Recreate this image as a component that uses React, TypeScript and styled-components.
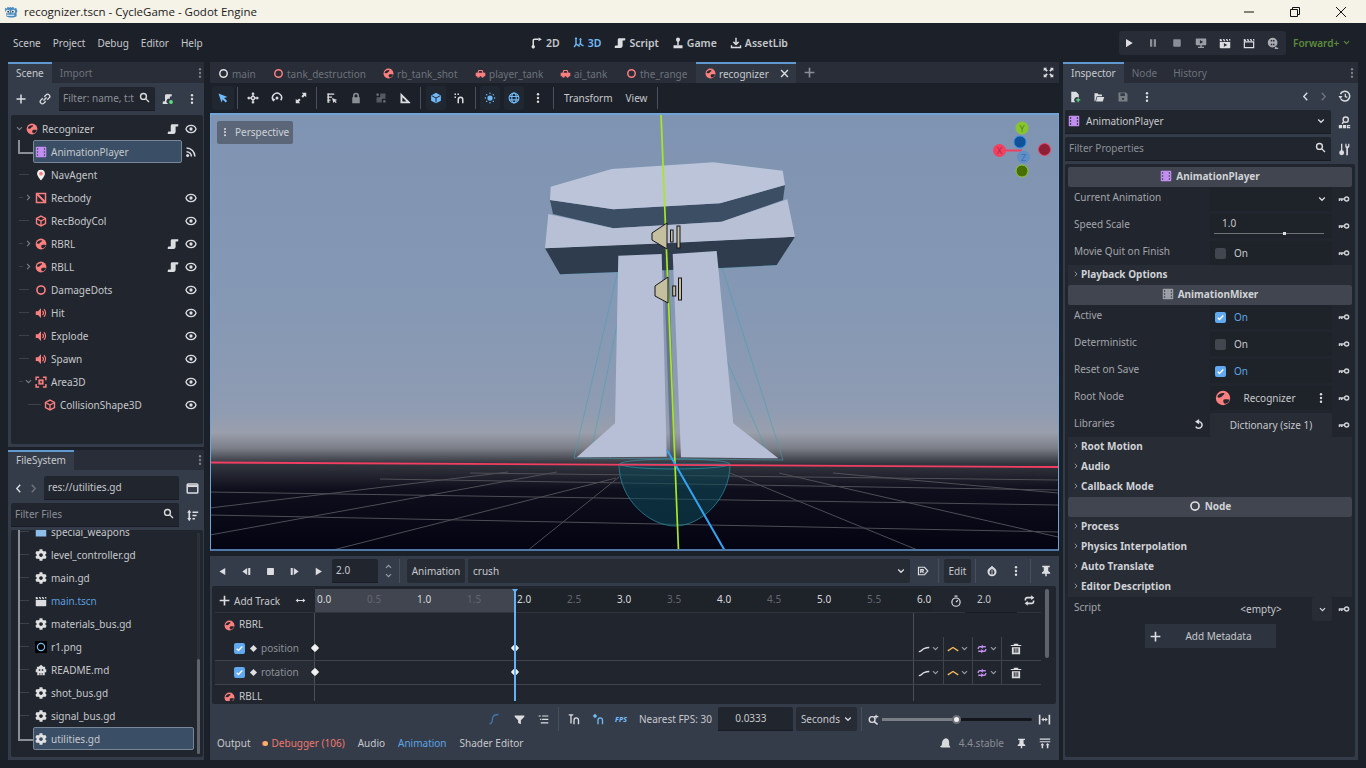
import React from "react";
import styled, { createGlobalStyle } from "styled-components";
import { FaCog } from "react-icons/fa";

const RED = "#fc7f7f";
const TXT = "#c6c8cc";
const DIM = "#6d727b";
const BLUE = "#70bafa";
const DARK = "#21252e";
const PANEL = "#353c49";

const Global = createGlobalStyle`
  html, body { margin: 0; padding: 0; background: #1c2029; }
  body { width: 1366px; height: 768px; overflow: hidden; font-family: "Noto Sans", sans-serif; font-size: 10px; color: ${TXT}; }
  * { box-sizing: border-box; }
`;

const Glyph = styled.svg<{ $c?: string }>`
  flex: none;
  display: block;
  color: ${(p) => p.$c || "#dcdde0"};
`;

const icons: Record<string, React.ReactNode> = {
  plus: <path fill="currentColor" d="M7 2h2v5h5v2H9v5H7V9H2V7h5z" />,
  dots: <g fill="currentColor"><circle cx="8" cy="3" r="1.6" /><circle cx="8" cy="8" r="1.6" /><circle cx="8" cy="13" r="1.6" /></g>,
  search: <g fill="none" stroke="currentColor" strokeWidth="2"><circle cx="6.5" cy="6.5" r="4.3" /><path d="M10 10l4.5 4.5" /></g>,
  link: <g fill="none" stroke="currentColor" strokeWidth="1.8"><path d="M7 5l2.5-2.5a2.6 2.6 0 0 1 4 4L11 9" /><path d="M9 11l-2.5 2.5a2.6 2.6 0 0 1-4-4L5 7" /><path d="M6 10l4-4" /></g>,
  eye: <g><path fill="none" stroke="currentColor" strokeWidth="1.7" d="M8 3.2C4.6 3.2 2 5.6 1.3 8c.7 2.4 3.3 4.8 6.7 4.8s6-2.4 6.7-4.8C14 5.6 11.4 3.2 8 3.2z" /><circle fill="currentColor" cx="8" cy="8" r="2.2" /></g>,
  script: <path fill="currentColor" d="M6.5 1.5H15v2.2a1 1 0 0 1-1 1h-2.5v7.3a3 3 0 0 1-3 2.8H1v-1.8a1.6 1.6 0 0 1 1.6-1.6H5V3.6a2.1 2.1 0 0 1 1.5-2.1z" />,
  addscript: <g><path fill="currentColor" d="M5.5 1.5H13v2.2a1 1 0 0 1-1 1h-1.5v3a3.5 3.5 0 0 0-2 6.8H1v-1.8a1.6 1.6 0 0 1 1.6-1.6H4V3.6a2.1 2.1 0 0 1 1.5-2.1z" /><circle cx="12" cy="12" r="2.6" fill="#5fd97f" /></g>,
  film: <path fill="currentColor" fillRule="evenodd" d="M2 1h12a1 1 0 0 1 1 1v12a1 1 0 0 1-1 1H2a1 1 0 0 1-1-1V2a1 1 0 0 1 1-1zm.6 2v2h1.6V3zm0 4v2h1.6V7zm0 4v2h1.6v-2zm9.2-8v2h1.6V3zm0 4v2h1.6V7zm0 4v2h1.6v-2z" />,
  globe: <g><circle cx="8" cy="8" r="7.2" fill="currentColor" /><path fill="#23272f" d="M2.2 7c1-2.6 3.6-4.2 6.8-3.9.8.6.4 1.6-.6 2-1.2.5-1.2 1.8-2.6 2.2C4.6 7.6 3.4 8 2.2 7zM8.8 9.6c1.8-.6 4.6-.7 5.8.1-.6 2.1-2.5 3.8-4.8 4.1-1.4-.6-2.2-3-1-4.2z" /></g>,
  pin: <g><path fill="#eeeeee" d="M8 1a5.2 5.2 0 0 0-5.2 5.2C2.8 9.6 8 15 8 15s5.2-5.4 5.2-8.8A5.2 5.2 0 0 0 8 1z" /><circle cx="8" cy="6.2" r="2.5" fill={RED} /></g>,
  rec: <g fill="none" stroke="currentColor" strokeWidth="2"><rect x="2" y="2" width="12" height="12" /><path d="M3 3l10 10" strokeWidth="2.6" /></g>,
  cube: <g fill="none" stroke="currentColor" strokeWidth="1.8"><path d="M8 1.5l6 3.2v6.6l-6 3.2-6-3.2V4.7z" /><path d="M2.5 5L8 8l5.5-3M8 8v6" /></g>,
  ring: <circle cx="8" cy="8" r="5.4" fill="none" stroke="currentColor" strokeWidth="2.2" />,
  speaker: <g><path fill="currentColor" d="M1 5.5h3l4-4v13l-4-4H1z" /><path fill="none" stroke="currentColor" strokeWidth="1.5" d="M10 5.2a4 4 0 0 1 0 5.6M12 3a7 7 0 0 1 0 10" /></g>,
  area: <g fill="none" stroke="currentColor" strokeWidth="2"><path d="M1.5 5.5v-4h4M10.5 1.5h4v4M14.5 10.5v4h-4M5.5 14.5h-4v-4" /><rect x="5.5" y="5.5" width="5" height="5" fill="currentColor" fillOpacity=".3" /></g>,
  rss: <g><circle cx="3.5" cy="12.5" r="2" fill="currentColor" /><path fill="none" stroke="currentColor" strokeWidth="2" d="M2 7.5a6.5 6.5 0 0 1 6.5 6.5M2 2.8A11.2 11.2 0 0 1 13.2 14" /></g>,
  clapper: <g fill="currentColor"><path d="M1 6.5h14V14a1 1 0 0 1-1 1H2a1 1 0 0 1-1-1z" /><path d="M1 2.5h2l1.5 3H1zM5 2.5h2l1.5 3h-2zM9 2.5h2l1.5 3h-2zM13 2.5h2v3h-.5z" /></g>,
  clapperPlay: <g fill="currentColor"><path fillRule="evenodd" d="M1 6.5h14V14a1 1 0 0 1-1 1H2a1 1 0 0 1-1-1zM6.5 8v5l4.5-2.5z" /><path d="M1 2.5h2l1.5 3H1zM5 2.5h2l1.5 3h-2zM9 2.5h2l1.5 3h-2zM13 2.5h2v3h-.5z" /></g>,
  clapperLine: <g><path fill="none" stroke="currentColor" strokeWidth="1.6" d="M1.8 6.5h12.4v7.7H1.8z" /><path fill="currentColor" d="M1 2.5h2l1.5 3H1zM5 2.5h2l1.5 3h-2zM9 2.5h2l1.5 3h-2zM13 2.5h2v3h-.5z" /></g>,
  folder: <path fill="currentColor" d="M1 3h5l1.5 1.5H15V14H1z" />,
  readme: <path fill="currentColor" fillRule="evenodd" d="M8 1l3 2.5h2.5V7H15v4h-2v4h-3v-3H9v3H7v-3H6v3H3v-4H1V7h1.5V3.5H5zM5 7v2h2V7zm4 0v2h2V7z" />,
  chevDown: <path fill="none" stroke="currentColor" strokeWidth="2" d="M3.5 5.5L8 10l4.5-4.5" />,
  chevUp: <path fill="none" stroke="currentColor" strokeWidth="2" d="M3.5 10.5L8 6l4.5 4.5" />,
  chevRight: <path fill="none" stroke="currentColor" strokeWidth="2" d="M5.5 3.5L10 8l-4.5 4.5" />,
  chevLeft: <path fill="none" stroke="currentColor" strokeWidth="2" d="M10.5 2.5L5.5 8l5 5.5" />,
  chevNext: <path fill="none" stroke="currentColor" strokeWidth="2" d="M5.5 2.5l5 5.5-5 5.5" />,
  panelBox: <g fill="none" stroke="currentColor"><rect x="1.5" y="2.5" width="13" height="11" rx="1" strokeWidth="1.8" /><path d="M1.5 5h13" strokeWidth="2.4" /></g>,
  sort: <g fill="currentColor"><path d="M4 1L1.5 4.5H3V11H1.5L4 15l2.5-4H5V4.5h1.5z" /><path d="M8 3h7v1.8H8zM8 7h5v1.8H8zM8 11h3v1.8H8z" /></g>,
  close: <path fill="none" stroke="currentColor" strokeWidth="2" d="M3 3l10 10M13 3L3 13" />,
  fullscreen: <path fill="currentColor" d="M1 1h5L4.5 2.5 7 5 5 7 2.5 4.5 1 6zM15 1v5l-1.5-1.5L11 7 9 5l2.5-2.5L10 1zM1 15v-5l1.5 1.5L5 9l2 2-2.5 2.5L6 15zM15 15h-5l1.5-1.5L9 11l2-2 2.5 2.5L15 10z" />,
  cursor: <path fill="currentColor" d="M2 2l12 4.5-4.5 1.5 4 4-2 2-4-4L6 14z" />,
  move: <path fill="currentColor" fillRule="evenodd" d="M8 0l2.5 3H9v2a3 3 0 0 1 2 2h2V5.5L16 8l-3 2.5V9h-2a3 3 0 0 1-2 2v2h1.5L8 16l-2.5-3H7v-2a3 3 0 0 1-2-2H3v1.5L0 8l3-2.5V7h2a3 3 0 0 1 2-2V3H5.5zM8 6.700a1.3 1.3 0 1 0 0 2.6 1.3 1.3 0 0 0 0-2.6z" />,
  rotate: <g><path fill="none" stroke="currentColor" strokeWidth="2" d="M3.5 11.5A6 6 0 1 1 13 11" /><path fill="currentColor" d="M1 8l5 1.5L3 13z" /><circle cx="8" cy="8" r="2" fill="currentColor" /></g>,
  scale: <path fill="currentColor" d="M9 1h6v6l-2-2-2.5 2.5L8.5 5.5 11 3zM7 15H1V9l2 2 2.5-2.5 2 2L5 13z" />,
  listSel: <g fill="currentColor"><path d="M2 2h9v1.8H2zM2 6h6v1.8H2zM2 10h4v1.8H2zM2 14h3v-1H2z" /><path d="M8 8l7 2.5-2.7 1 2 2-1.3 1.3-2-2L10 15z" /><path d="M2 2h1.8v12H2z" /></g>,
  lock: <path fill="currentColor" fillRule="evenodd" d="M8 1a4 4 0 0 1 4 4v2h1v8H3V7h1V5a4 4 0 0 1 4-4zm0 2a2 2 0 0 0-2 2v2h4V5a2 2 0 0 0-2-2z" />,
  group: <g fill="currentColor"><rect x="2" y="2" width="3" height="3" /><rect x="7" y="2" width="7" height="7" opacity=".7" /><rect x="2" y="7" width="7" height="7" opacity=".7" /><rect x="11" y="11" width="3" height="3" /></g>,
  ruler: <path fill="currentColor" fillRule="evenodd" d="M2 1l13 13v1H2zm2.5 6v5.500H10z" />,
  snap: <g><g fill="currentColor"><rect x="2" y="2" width="2" height="2" /><rect x="6" y="2" width="2" height="2" /><rect x="2" y="6" width="2" height="2" /></g><path fill="none" stroke="currentColor" strokeWidth="2" d="M7 15V10a3 3 0 0 1 6 0v5" /></g>,
  sun: <g fill="currentColor"><circle cx="8" cy="8" r="3.5" /><circle cx="8" cy="1.8" r="1" /><circle cx="8" cy="14.2" r="1" /><circle cx="1.8" cy="8" r="1" /><circle cx="14.2" cy="8" r="1" /><circle cx="3.6" cy="3.6" r="1" /><circle cx="12.4" cy="3.6" r="1" /><circle cx="3.6" cy="12.4" r="1" /><circle cx="12.4" cy="12.4" r="1" /></g>,
  world: <g fill="none" stroke="currentColor" strokeWidth="1.5"><circle cx="8" cy="8" r="6.5" /><ellipse cx="8" cy="8" rx="3" ry="6.5" /><path d="M1.5 6h13M1.5 10.5h13" /></g>,
  cubeFill: <g><path fill="currentColor" d="M8 1l6.500 3.500v7L8 15l-6.500-3.500v-7z" /><path fill="none" stroke="#222730" strokeWidth="1.3" d="M2.5 5L8 8l5.500-3M8 8v6" /></g>,
  d2: <g><path fill="none" stroke="currentColor" strokeWidth="2" d="M3 15V4.5A1.5 1.5 0 0 1 4.5 3H10" /><circle cx="3" cy="13" r="2.3" fill="currentColor" /><path fill="currentColor" d="M10 .5L14.5 3 10 5.5z" /></g>,
  d3: <g><path fill="none" stroke="currentColor" strokeWidth="1.9" d="M4 1.500v8M4 9.500l-2.500 4M4 9.500l5 3" /><path fill="none" stroke="currentColor" strokeWidth="1.9" d="M10 3v6.500l4 2.500M10 9.500H7.500" /><path fill="currentColor" d="M4 0L6 2.800H2zM10 1L12 3.800H8z" /></g>,
  game: <g fill="currentColor"><circle cx="8" cy="3.5" r="2.7" /><path d="M7 5h2v6H7z" /><path d="M2 11h12v4H2z" /></g>,
  download: <g fill="none" stroke="currentColor" strokeWidth="1.9"><path d="M8 1v8.500M4.500 6.500L8 10l3.500-3.500" /><path d="M2 11v3h12v-3" /></g>,
  play: <path fill="currentColor" d="M4 2.5l9 5.500-9 5.500z" />,
  pause: <path fill="currentColor" d="M4 3h3v10H4zM9 3h3v10H9z" />,
  stop: <rect fill="currentColor" x="3" y="3" width="10" height="10" rx="1" />,
  monitor: <path fill="currentColor" fillRule="evenodd" d="M2 2h12a1 1 0 0 1 1 1v7a1 1 0 0 1-1 1H9v2h3v1.5H4V13h3v-2H2a1 1 0 0 1-1-1V3a1 1 0 0 1 1-1zm4.500 2v5l4.500-2.500z" />,
  reel: <g fill="currentColor"><path fillRule="evenodd" d="M7.5 1a6.5 6.5 0 1 1 0 13 6.5 6.5 0 0 1 0-13zM5 4v2h2V4zm3 0v2h2V4zM5 9v2h2V9zm3 0v2h2V9z" /><path d="M11 13l4 1.5V16h-5z" /></g>,
  fileAdd: <g><path fill="currentColor" d="M3 1h6.500L13 4.500V9a3.500 3.500 0 0 0-4.500 6H3z" /><path fill="#5fd97f" d="M11.500 9.500h1.600V11H15v1.500h-1.900V15h-1.600v-2.500H9.500V11h2z" /></g>,
  folderOpen: <path fill="currentColor" fillRule="evenodd" d="M2 3h4l1.500 1.500H12V7H5L3 13.500h-1zM5.700 8H15l-2 6H4z" />,
  save: <path fill="currentColor" fillRule="evenodd" d="M2 2h10l2 2v10H2zm2.500 1v3.500h6V3zm2 7.500a1.500 1.500 0 1 0 3 0 1.500 1.500 0 0 0-3 0z" />,
  history: <g><path fill="none" stroke="currentColor" strokeWidth="1.8" d="M3.500 11A6 6 0 1 0 3 5" /><path fill="currentColor" d="M.5 7.500h5L3 11z" /><path fill="none" stroke="currentColor" strokeWidth="1.5" d="M9 4.500v3.500l2.500 1" /></g>,
  doc: <g><circle cx="9.5" cy="4.5" r="3.2" fill="none" stroke="currentColor" strokeWidth="1.7" /><path stroke="currentColor" strokeWidth="1.8" d="M7 7.500L5 9.500" /><path fill="currentColor" d="M1 11h4v4H1zM6 11h4v4H6zM11 11h4v1.500h-2.500v1H15V15h-4z" /></g>,
  tools: <g fill="currentColor"><circle cx="4.5" cy="12" r="3" /><path d="M3.700 1h1.600v9H3.700zM9 1h1.500v3h2V1H14v4l-1.800 1.500V15h-2V6.500L9 5z" /></g>,
  key: <g><circle cx="11.500" cy="8" r="2.700" fill="none" stroke="currentColor" strokeWidth="1.900" /><path fill="currentColor" d="M1 7h8v2H6v1.500H4V9H3v1.500H1z" /></g>,
  revert: <g><path fill="none" stroke="currentColor" strokeWidth="2" d="M9 3.500a4.500 4.500 0 1 1-4 6.700" /><path fill="currentColor" d="M9.500 0v7L4 3.500z" /></g>,
  prev: <path fill="currentColor" d="M12 3v10L3.500 8z" />,
  stepBack: <g fill="currentColor"><path d="M9 3v10L2 8z" /><rect x="10.5" y="3" width="3" height="10" rx=".5" /></g>,
  stepFwd: <g fill="currentColor"><path d="M7 3v10l7-5z" /><rect x="2.5" y="3" width="3" height="10" rx=".5" /></g>,
  rename: <g fill="none" stroke="currentColor" strokeWidth="1.6"><path d="M2 3h8l4.500 5-4.500 5H2z" /><path d="M5 10.500V6h2.500a1 1 0 0 1 0 2.200H5M7.500 8.500l1 2" /></g>,
  onion: <path fill="currentColor" fillRule="evenodd" d="M8 1c1.500 2.200 6 3.600 6 8a6 6 0 0 1-12 0c0-4.400 4.500-5.800 6-8zm-.5 3.500C6 6.200 4.700 7.500 4.700 9.500c0 1.700 1.200 3 2.800 3.300zm1 0v8.300c1.600-.3 2.800-1.600 2.800-3.300 0-2-1.300-3.300-2.800-5z" />,
  pushpin: <g fill="currentColor"><path d="M3 1h10v2H11v5l2.500 2v1.500H9V15H7v-3.500H2.500V10L5 8V3H3z" /></g>,
  timer: <g fill="none" stroke="currentColor" strokeWidth="1.6"><circle cx="8" cy="9.500" r="5.500" /><path d="M6 1.500h4M8 9.500l2.500-2.500" /></g>,
  loop: <g fill="none" stroke="currentColor" strokeWidth="2"><path d="M3 8V6.500A2 2 0 0 1 5 4.500h6" /><path d="M13 8v1.500a2 2 0 0 1-2 2H5" /><path fill="currentColor" stroke="none" d="M10 1.500l4 3-4 3zM6 8.500l-4 3 4 3z" /></g>,
  trash: <g fill="currentColor"><path d="M5 1h6v1.500h4v1.500H1V2.500h4z" /><path fillRule="evenodd" d="M2.500 5.500h11V15h-11zM5 7v6h1.300V7zm2.400 0v6h1.300V7zm2.400 0v6H11V7z" /></g>,
  curve: <path fill="none" stroke="currentColor" strokeWidth="1.8" d="M1 11.500c4 0 3.500-2.500 7-4 2-.8 4-1.500 7-1.500" />,
  caret: <path fill="none" stroke="currentColor" strokeWidth="1.8" d="M1 10.500L8 6l7 4.500" />,
  wrap: <g fill="none" stroke="currentColor" strokeWidth="1.8"><path d="M13 5H5a2 2 0 0 0-2 2v1M3 11h8a2 2 0 0 0 2-2V8" /><path fill="currentColor" stroke="none" d="M9 2l-3 3 3 3zM7 8l3 3-3 3z" /></g>,
  bezier: <path fill="none" stroke="currentColor" strokeWidth="1.8" d="M2 14.500c5 0 3-7 5-10 1-1.500 3-2.500 7-2.500" />,
  filter: <path fill="currentColor" d="M1 2h14v2L10 9v6l-4-2V9L1 4z" />,
  listTree: <g fill="currentColor"><path d="M1 2h3v1.800H1zM6 2h9v1.800H6zM6 7h9v1.800H6zM4 12h11v1.800H4zM3 7h1.800v1.800H3z" /></g>,
  snapT: <g><path fill="none" stroke="currentColor" strokeWidth="1.8" d="M1 2.500h6M4 2.500V14M8 15V9.500a3 3 0 0 1 6 0V15" /></g>,
  snapK: <g><path fill="currentColor" d="M4 1l3 3-3 3-3-3z" /><path fill="none" stroke="currentColor" strokeWidth="1.8" d="M8 15V9.500a3 3 0 0 1 6 0V15" /></g>,
  zoom: <g><circle cx="6" cy="8" r="4.2" fill="none" stroke="currentColor" strokeWidth="2" /><path fill="none" stroke="currentColor" strokeWidth="2.2" d="M9 11l5 4" /><path fill="currentColor" d="M11 1h1.600v2H15v1.600h-2.400v2H11v-2H9V3h2z" /></g>,
  fit: <g fill="currentColor"><path d="M1 2h2v12H1zM13 2h2v12h-2z" /><path d="M4 8l3-2.500v1.800h2V5.500L12 8l-3 2.500V8.700H7v1.800z" /></g>,
  godot: <path fill="currentColor" d="M9.500 1.500c2.500.5 4 2.500 4 5v4.500L15 13v1H5c-2 0-3.500-.5-3.500-1.500 1.500-.5 2.500-1.500 2.500-4.500 0-3 2-6 5.500-6.500z" />,
  layout: <g fill="currentColor"><path d="M1 2h14v1.800H1zM1 5.500h14V7H1z" /><path d="M4.500 8L7 11H5.500v4h-2v-4H2zM11.500 8L14 11h-1.500v4h-2v-4H9z" /></g>,
  arrows: <path fill="currentColor" d="M1 8l3.500-3v2.200h7V5L15 8l-3.500 3V8.800h-7V11z" />,
  car: <path fill="currentColor" fillRule="evenodd" d="M5 3h6l1.500 4H15v5h-2a2 2 0 0 1-4 0H7a2 2 0 0 1-4 0H1V7h2.500zm1 1.500L5.300 7h5.400L10 4.500z" />,
  checkMark: <path fill="none" stroke="#fff" strokeWidth="2.4" d="M3 8.500l3.200 3L13 4.500" />,
};

const I = ({ n, s = 12, c }: { n: string; s?: number; c?: string }) => (
  <Glyph $c={c} width={s} height={s} viewBox="0 0 16 16">
    {icons[n]}
  </Glyph>
);

/* ---------- window ---------- */
const Shell = styled.div`
  width: 1366px;
  height: 768px;
  display: flex;
  flex-direction: column;
  background: #1c2029;
`;
const TitleBar = styled.header`
  height: 23px;
  flex: none;
  background: #f5f2e8;
  display: flex;
  align-items: center;
  padding: 0 2px 0 3px;
  color: #1a1a1a;
  font-family: "Open Sans", sans-serif;
  font-size: 11.5px;
  gap: 6px;
`;
const WinButtons = styled.div`
  margin-left: auto;
  display: flex;
`;
const WinButton = styled.span`
  width: 46px;
  height: 23px;
  display: flex;
  align-items: center;
  justify-content: center;
`;
const MenuBar = styled.nav`
  height: 39px;
  flex: none;
  display: grid;
  grid-template-columns: 518px auto 1fr;
  align-items: center;
  padding: 0 8px 0 13px;
`;
const Menus = styled.div`
  display: flex;
  gap: 12px;
`;
const Modes = styled.div`
  display: flex;
  gap: 13px;
`;
const Mode = styled.span<{ $on?: boolean }>`
  display: flex;
  align-items: center;
  gap: 3px;
  font-weight: 600;
  font-size: 10.5px;
  color: ${(p) => (p.$on ? BLUE : TXT)};
`;
const RunSide = styled.div`
  justify-self: end;
  display: flex;
  align-items: center;
  gap: 7px;
`;
const RunBar = styled.div`
  width: 167px;
  height: 24px;
  background: #272c36;
  border-radius: 3px;
  display: flex;
  align-items: center;
  gap: 12px;
  padding-left: 4px;
`;
const Renderer = styled.span`
  color: #5c8a3c;
  font-weight: 600;
  display: flex;
  align-items: center;
  gap: 3px;
  width: 65px;
`;

/* ---------- main layout ---------- */
const Work = styled.main`
  flex: 1;
  display: flex;
  padding: 0 8px 8px;
`;
const LeftCol = styled.div`
  width: 196px;
  margin-right: 6px;
  display: flex;
  flex-direction: column;
  gap: 3px;
  flex: none;
`;
const CenterCol = styled.div`
  width: 849px;
  margin-right: 4px;
  flex: none;
  display: flex;
  flex-direction: column;
`;
const RightCol = styled.div`
  width: 295px;
  flex: none;
  display: flex;
  flex-direction: column;
`;
const TabStrip = styled.div<{ $h?: number }>`
  height: ${(p) => p.$h || 21}px;
  flex: none;
  background: #282d37;
  display: flex;
  align-items: stretch;
`;
const DockTab = styled.div<{ $on?: boolean }>`
  padding: 0 8px 2px;
  display: flex;
  align-items: center;
  color: ${(p) => (p.$on ? TXT : DIM)};
  background: ${(p) => (p.$on ? PANEL : "transparent")};
  border-top: 2px solid ${(p) => (p.$on ? "#6199d0" : "transparent")};
`;
const StripEnd = styled.span<{ $w: number }>`
  margin-left: auto;
  width: ${(p) => p.$w}px;
  display: flex;
  align-items: center;
  justify-content: center;
`;
const DockPanel = styled.section<{ $h: number }>`
  height: ${(p) => p.$h}px;
  background: ${PANEL};
  display: flex;
  flex-direction: column;
`;
const ToolRow = styled.div<{ $h: number; $pl?: number; $mt?: number; $mb?: number }>`
  height: ${(p) => p.$h}px;
  flex: none;
  display: flex;
  align-items: center;
  padding-left: ${(p) => p.$pl || 0}px;
  margin-top: ${(p) => p.$mt || 0}px;
  margin-bottom: ${(p) => p.$mb || 0}px;
`;
const Slot = styled.span<{ $w?: number; $on?: boolean; $ml?: number }>`
  flex: none;
  width: ${(p) => p.$w || 24}px;
  height: ${(p) => (p.$on ? "24px" : "auto")};
  margin-left: ${(p) => p.$ml || 0}px;
  display: flex;
  align-items: center;
  justify-content: center;
  background: ${(p) => (p.$on ? "#212730" : "transparent")};
  border-radius: 3px;
`;
const Field = styled.div<{ $w?: number; $ml?: number }>`
  width: ${(p) => (p.$w ? `${p.$w}px` : "auto")};
  flex: ${(p) => (p.$w ? "none" : "1")};
  margin-left: ${(p) => p.$ml || 0}px;
  height: 24px;
  background: #21252e;
  border-bottom: 1px solid #191c22;
  border-radius: 2px 2px 0 0;
  display: flex;
  align-items: center;
  justify-content: space-between;
  padding: 0 5px 2px 4px;
`;
const Hint = styled.span`
  color: #8b8f96;
  white-space: nowrap;
  overflow: hidden;
`;

/* ---------- trees ---------- */
const TreeBox = styled.div<{ $pt?: number }>`
  flex: 1;
  margin: 0 1px 3px 3px;
  padding-top: ${(p) => p.$pt || 0}px;
  background: ${DARK};
  overflow: hidden;
  position: relative;
  border-radius: 2px;
`;
const TreeRow = styled.div<{ $d: number; $sel?: boolean; $stub?: number; $bx?: number; $tall?: boolean }>`
  height: 23px;
  position: relative;
  &::before {
    content: "";
    position: absolute;
    left: ${(p) => (p.$sel ? 7 : 8 + 9 * (p.$d - 1))}px;
    top: ${(p) => (p.$sel ? (p.$tall ? "-300px" : "0") : "11px")};
    height: ${(p) => (p.$sel ? (p.$tall ? "312px" : "12px") : "1px")};
    width: ${(p) => (p.$sel ? 15 : p.$stub ?? 0)}px;
    background: ${(p) => (p.$sel ? "transparent" : "#3c414a")};
    border-left: ${(p) => (p.$sel ? "2px solid #8a8f97" : "0")};
    border-bottom: ${(p) => (p.$sel ? "2px solid #8a8f97" : "0")};
  }
  &::after {
    content: "";
    display: ${(p) => (p.$sel ? "block" : "none")};
    position: absolute;
    left: 22px;
    right: ${(p) => p.$bx ?? 21}px;
    top: 0;
    bottom: 0;
    background: #3a4e66;
    border: 1px solid #788798;
    border-radius: 2px;
  }
`;
const RowBody = styled.div<{ $d: number }>`
  position: relative;
  z-index: 1;
  height: 100%;
  display: flex;
  align-items: center;
  padding-left: ${(p) => 1 + 9 * p.$d}px;
  padding-right: 6px;
`;
const ArrowSlot = styled.span`
  width: 14px;
  flex: none;
  display: flex;
  justify-content: center;
`;
const RowName = styled.span<{ $c?: string }>`
  margin-left: 4px;
  color: ${(p) => p.$c || TXT};
  white-space: nowrap;
`;
const RowEnd = styled.span`
  margin-left: auto;
  display: flex;
  align-items: center;
  gap: 6px;
`;
const FileList = styled.div`
  margin-top: -10px;
`;
const ScrollThumb = styled.span`
  position: absolute;
  right: 3px;
  top: 129px;
  bottom: 3px;
  width: 3px;
  border-radius: 2px;
  background: #5f646c;
`;
const ScrollRail = styled.span`
  position: absolute;
  right: 3px;
  top: 3px;
  bottom: 3px;
  width: 3px;
  background: #2b3039;
`;

/* ---------- center ---------- */
const EditorTab = styled.div<{ $on?: boolean; $w: number }>`
  width: ${(p) => p.$w}px;
  flex: none;
  padding: 0 0 0 ${(p) => (p.$on ? 9 : 8)}px;
  display: flex;
  align-items: center;
  gap: 3px;
  color: ${(p) => (p.$on ? TXT : DIM)};
  background: ${(p) => (p.$on ? "#303642" : "transparent")};
  border-top: 2px solid ${(p) => (p.$on ? "#6199d0" : "transparent")};
`;
const Sep = styled.span<{ $mx?: number; $h?: number }>`
  flex: none;
  width: 1px;
  height: ${(p) => p.$h || 24}px;
  background: #4a505b;
  margin: 0 ${(p) => p.$mx ?? 3}px;
`;
const BarText = styled.span<{ $ml?: number; $c?: string }>`
  margin-left: ${(p) => p.$ml || 0}px;
  color: ${(p) => p.$c || TXT};
  white-space: nowrap;
  flex: none;
`;
const Viewport = styled.div`
  height: 438px;
  flex: none;
  position: relative;
  overflow: hidden;
  &::after {
    content: "";
    position: absolute;
    inset: 0;
    border: 1px solid #6ea4d8;
    border-top-width: 2px;
    border-bottom: 2px solid #4d78a8;
    pointer-events: none;
  }
`;
const SceneSvg = styled.svg`
  display: block;
  width: 100%;
  height: 100%;
`;
const Perspective = styled.div`
  position: absolute;
  left: 7px;
  top: 8px;
  width: 76px;
  height: 23px;
  border-radius: 2px;
  background: #5b6679;
  color: #d0d3d8;
  display: flex;
  align-items: center;
  padding: 0 0 2px 3px;
  gap: 5px;
`;
const Bottom = styled.section`
  height: 204px;
  margin-top: 5px;
  flex: none;
  background: ${PANEL};
  display: flex;
  flex-direction: column;
  padding-top: 3px;
`;
const Chip = styled.span<{ $w: number; $ml?: number; $sel?: boolean }>`
  flex: none;
  width: ${(p) => p.$w}px;
  height: 24px;
  margin-left: ${(p) => p.$ml || 0}px;
  background: #262b34;
  border-radius: 2px;
  display: flex;
  align-items: center;
  justify-content: ${(p) => (p.$sel ? "space-between" : "center")};
  padding: 0 ${(p) => (p.$sel ? 4 : 0)}px 0 ${(p) => (p.$sel ? 5 : 0)}px;
`;
const Timeline = styled.div`
  height: 118px;
  margin: 3px 3px 3px 2px;
  flex: none;
  background: ${DARK};
  border-radius: 2px;
  display: flex;
  padding: 3px 0 3px 3px;
  position: relative;
  overflow: hidden;
`;
const TimelineBody = styled.div`
  width: 826px;
  flex: none;
  overflow: hidden;
`;
const RulerRow = styled.div`
  height: 24px;
  display: flex;
  border-bottom: 1px solid #2f343d;
`;
const AddTrack = styled.div`
  width: 100px;
  flex: none;
  display: flex;
  align-items: center;
  padding-left: 3px;
  gap: 3px;
  white-space: nowrap;
`;
const Ruler = styled.div`
  width: 617px;
  flex: none;
  display: flex;
  background: linear-gradient(to right, #40454f 200px, #1e2229 200px);
`;
const Tick = styled.span<{ $major: boolean }>`
  width: 50px;
  flex: none;
  padding: 3px 0 0 2px;
  font-size: 10px;
  color: ${(p) => (p.$major ? "#d8d9dc" : "#63676f")};
`;
const LengthBox = styled.div`
  flex: 1;
  display: flex;
  align-items: center;
`;
const TrackRow = styled.div<{ $line?: boolean }>`
  height: 24px;
  display: grid;
  grid-template-columns: 99px 600px 1fr;
  border-bottom: ${(p) => (p.$line ? "1px solid #3e434c" : "0")};
`;
const TrackName = styled.div<{ $sub?: boolean; $alt?: boolean }>`
  display: flex;
  align-items: center;
  padding-left: ${(p) => (p.$sub ? 19 : 9)}px;
  gap: 4px;
  color: ${(p) => (p.$sub ? "#8d9198" : TXT)};
  background: ${(p) => (p.$alt ? "#262b34" : "transparent")};
`;
const TrackLabel = styled.span`
  margin-top: -2px;
`;
const TrackLane = styled.div`
  position: relative;
  border-left: 1px solid #4a4e56;
  border-right: 1px solid #4a4e56;
`;
const KeyFrame = styled.span<{ $x: number }>`
  position: absolute;
  left: ${(p) => p.$x - 3}px;
  top: 8px;
  width: 6px;
  height: 6px;
  background: #f0f0f0;
  transform: rotate(45deg);
  border-radius: 1px;
`;
const TrackTools = styled.div`
  display: flex;
  align-items: center;
`;
const TrackCell = styled.span<{ $w: number; $sep?: boolean }>`
  width: ${(p) => p.$w}px;
  height: 100%;
  flex: none;
  display: flex;
  align-items: center;
  justify-content: center;
  gap: 1px;
  border-right: ${(p) => (p.$sep ? "1px solid #3e434c" : "0")};
`;
const Check = styled.span<{ $on?: boolean; $m?: number }>`
  width: 11px;
  height: 11px;
  flex: none;
  border-radius: 2px;
  background: ${(p) => (p.$on ? "#60a9f0" : "#41464f")};
  display: flex;
  align-items: center;
  justify-content: center;
  margin-right: ${(p) => p.$m || 0}px;
`;
const Dia = styled.span`
  width: 5px;
  height: 5px;
  margin: 0 1px 0 2px;
  background: #e0e0e0;
  transform: rotate(45deg);
  flex: none;
`;
const Playhead = styled.span`
  position: absolute;
  left: 302px;
  top: 3px;
  bottom: 3px;
  width: 2px;
  background: #66b1f5;
  &::before {
    content: "";
    position: absolute;
    top: 0;
    left: -2px;
    border: 3px solid transparent;
    border-top: 4px solid #66b1f5;
  }
`;
const ScrollArea = styled.div`
  flex: 1;
  display: flex;
  justify-content: center;
  position: relative;
`;
const VThumb = styled.span`
  width: 4px;
  height: 69px;
  margin-right: 3px;
  border-radius: 2px;
  background: #5f646c;
`;
const ZoomTrack = styled.div`
  width: 150px;
  height: 3px;
  flex: none;
  position: relative;
  background: #13161b;
  border-radius: 2px;
`;
const ZoomFill = styled.span`
  display: block;
  width: 75px;
  height: 100%;
  background: #7a7e85;
`;
const ZoomThumb = styled.span`
  position: absolute;
  left: 70px;
  top: -3px;
  width: 9px;
  height: 9px;
  border-radius: 50%;
  background: #f0f0f0;
  border: 2px solid #6b7078;
`;
const BottomTabs = styled.div`
  height: 22px;
  margin-top: 1px;
  display: flex;
  align-items: center;
  padding: 0 2px 0 7px;
  gap: 13px;
`;
const DebugDot = styled.span`
  width: 5px;
  height: 5px;
  border-radius: 50%;
  background: #f6b26b;
  margin-right: 4px;
  box-shadow: -1px 0 0 #f06060;
`;
const DebugTab = styled.span`
  display: flex;
  align-items: center;
  color: #f0776d;
  margin-left: -1px;
`;
const StatusEnd = styled.div`
  margin-left: auto;
  display: flex;
  align-items: center;
`;
const FpsBadge = styled.span`
  font-size: 7px;
  font-weight: 800;
  color: ${BLUE};
  font-style: italic;
`;

/* ---------- inspector ---------- */
const InspBox = styled.div`
  flex: 1;
  margin: 3px 3px 3px 2px;
  background: ${DARK};
  border-radius: 2px;
  padding-top: 3px;
`;
const Banner = styled.div`
  height: 20px;
  margin: 0 3px;
  padding-bottom: 2px;
  background: #40454f;
  border-radius: 2px;
  display: flex;
  align-items: center;
  justify-content: center;
  gap: 4px;
  font-weight: 700;
  color: #d0d2d6;
`;
const Section = styled.div`
  height: 20px;
  margin: 0 3px;
  padding: 0 0 2px 4px;
  background: #272c35;
  display: flex;
  align-items: center;
  gap: 1px;
  font-weight: 700;
  color: #d0d2d6;
`;
const PropGroup = styled.div`
  display: grid;
  gap: 3px;
`;
const Prop = styled.div`
  height: 24px;
  display: grid;
  grid-template-columns: 145px 122px 23px;
`;
const PropLabel = styled.div`
  display: flex;
  justify-content: space-between;
  align-items: flex-start;
  padding: 0 6px 4px 9px;
  line-height: 20px;
  color: #a3a6ab;
`;
const RevertSlot = styled.span`
  margin-top: 6px;
`;
const Value = styled.div<{ $bg?: string; $center?: boolean }>`
  background: ${(p) => p.$bg || "#1e2229"};
  border-radius: 2px;
  display: flex;
  align-items: center;
  position: relative;
  padding: 0 5px;
  gap: 7px;
  justify-content: ${(p) => (p.$center ? "center" : "flex-start")};
  color: ${TXT};
`;
const KeyCell = styled.div`
  display: flex;
  align-items: center;
  justify-content: center;
`;
const SpeedLine = styled.span`
  position: absolute;
  left: 4px;
  right: 8px;
  bottom: 4px;
  height: 1px;
  background: #6f737a;
  &::after {
    content: "";
    position: absolute;
    left: 69px;
    top: -1px;
    width: 3px;
    height: 3px;
    background: #e0e0e0;
  }
`;
const EndIcon = styled.span`
  margin-left: auto;
  display: flex;
`;
const MetaWrap = styled.div`
  display: flex;
  justify-content: center;
  margin-top: 3px;
`;
const MetaButton = styled.div`
  width: 131px;
  height: 24px;
  background: #2e343f;
  border-radius: 1px;
  display: flex;
  align-items: center;
  padding-left: 4px;
  color: ${TXT};
`;
const MetaText = styled.span`
  flex: 1;
  text-align: center;
`;
const SelectName = styled.span`
  display: flex;
  align-items: center;
  gap: 6px;
  margin-left: -1px;
`;
const SpeedText = styled.span`
  margin: -6px 0 0 7px;
`;
const RootName = styled.span`
  flex: 1;
  text-align: center;
  padding-right: 7px;
`;
const ScriptValue = styled.div`
  display: flex;
`;
const ScriptText = styled.span`
  flex: 1;
  display: flex;
  align-items: center;
  justify-content: center;
`;
const ScriptDrop = styled.span`
  width: 20px;
  display: flex;
  align-items: center;
  justify-content: center;
  background: #272c35;
  border-radius: 2px;
`;

const sceneRows = [
  { n: "Recognizer", ic: "globe", d: 0, arrow: "chevDown", script: true, eye: true },
  { n: "AnimationPlayer", ic: "film", c: "#c38ef1", d: 1, sel: true, rss: true },
  { n: "NavAgent", ic: "pin", d: 1, stub: 10 },
  { n: "Recbody", ic: "rec", d: 1, stub: 4, arrow: "chevRight", eye: true },
  { n: "RecBodyCol", ic: "cube", d: 1, stub: 10, eye: true },
  { n: "RBRL", ic: "globe", d: 1, stub: 4, arrow: "chevRight", script: true, eye: true },
  { n: "RBLL", ic: "globe", d: 1, stub: 4, arrow: "chevRight", script: true, eye: true },
  { n: "DamageDots", ic: "ring", d: 1, stub: 10, eye: true },
  { n: "Hit", ic: "speaker", d: 1, stub: 10, eye: true },
  { n: "Explode", ic: "speaker", d: 1, stub: 10, eye: true },
  { n: "Spawn", ic: "speaker", d: 1, stub: 10, eye: true },
  { n: "Area3D", ic: "area", d: 1, stub: 4, arrow: "chevDown", eye: true },
  { n: "CollisionShape3D", ic: "cube", d: 2, stub: 13, eye: true },
];

const fileRows = [
  { n: "special_weapons", ic: "folder", c: "#8dbde9" },
  { n: "level_controller.gd", ic: "gear" },
  { n: "main.gd", ic: "gear" },
  { n: "main.tscn", ic: "clapper", tc: "#5b9ddf" },
  { n: "materials_bus.gd", ic: "gear" },
  { n: "r1.png", ic: "img" },
  { n: "README.md", ic: "readme" },
  { n: "shot_bus.gd", ic: "gear" },
  { n: "signal_bus.gd", ic: "gear" },
  { n: "utilities.gd", ic: "gear", sel: true },
];

const FileIcon = ({ ic, c }: { ic: string; c?: string }) =>
  ic === "gear" ? (
    <Glyph as={FaCog} $c="#e0e0e0" size={12} />
  ) : ic === "img" ? (
    <Glyph width={12} height={12} viewBox="0 0 12 12">
      <rect width="12" height="12" fill="#000" />
      <circle cx="6" cy="6" r="3.6" fill="none" stroke="#78c0f0" strokeWidth="1.2" />
    </Glyph>
  ) : (
    <I n={ic} c={c} />
  );

const SceneDock = () => (
  <div>
    <TabStrip>
      <DockTab $on>Scene</DockTab>
      <DockTab>Import</DockTab>
      <StripEnd $w={8}><I n="dots" c="#7a7e85" /></StripEnd>
    </TabStrip>
    <DockPanel $h={364}>
      <ToolRow $h={32} $pl={1}>
        <Slot><I n="plus" /></Slot>
        <Slot><I n="link" /></Slot>
        <Field $w={96} $ml={2}>
          <Hint>Filter: name, t:t</Hint>
          <I n="search" s={11} />
        </Field>
        <Slot $ml={1}><I n="addscript" /></Slot>
        <Slot><I n="dots" /></Slot>
      </ToolRow>
      <TreeBox $pt={2}>
        {sceneRows.map((r) => (
          <TreeRow key={r.n} $d={r.d} $sel={r.sel} $stub={r.stub}>
            <RowBody $d={r.d}>
              <ArrowSlot>{r.arrow && <I n={r.arrow} s={9} c="#7a7e85" />}</ArrowSlot>
              <I n={r.ic} c={r.c || RED} />
              <RowName>{r.n}</RowName>
              <RowEnd>
                {r.script && <I n="script" />}
                {r.rss && <I n="rss" />}
                {r.eye && <I n="eye" />}
              </RowEnd>
            </RowBody>
          </TreeRow>
        ))}
      </TreeBox>
    </DockPanel>
  </div>
);

const FileDock = () => (
  <div>
    <TabStrip $h={20}>
      <DockTab $on>FileSystem</DockTab>
      <StripEnd $w={8}><I n="dots" c="#7a7e85" /></StripEnd>
    </TabStrip>
    <DockPanel $h={290}>
      <ToolRow $h={24} $pl={3} $mt={6}>
        <Slot $w={15}><I n="chevLeft" s={11} /></Slot>
        <Slot $w={15}><I n="chevNext" s={11} c="#6d727b" /></Slot>
        <Field $w={135} $ml={3}><span>res://utilities.gd</span></Field>
        <Slot $w={24} $ml={1}><I n="panelBox" s={13} /></Slot>
      </ToolRow>
      <ToolRow $h={24} $pl={3} $mt={3} $mb={3}>
        <Field $w={168}><Hint>Filter Files</Hint><I n="search" s={11} /></Field>
        <Slot $w={24} $ml={1}><I n="sort" s={13} /></Slot>
      </ToolRow>
      <TreeBox>
        <ScrollRail />
        <ScrollThumb />
        <FileList>
          {fileRows.map((r) => (
            <TreeRow key={r.n} $d={1} $sel={r.sel} $tall $stub={10} $bx={9}>
              <RowBody $d={1}>
                <ArrowSlot />
                <FileIcon ic={r.ic} c={r.c} />
                <RowName $c={r.tc}>{r.n}</RowName>
              </RowBody>
            </TreeRow>
          ))}
        </FileList>
      </TreeBox>
    </DockPanel>
  </div>
);

const editorTabs = [
  { n: "main", ic: "ring", c: "#e0e0e0", w: 55 },
  { n: "tank_destruction", ic: "ring", c: RED, w: 110 },
  { n: "rb_tank_shot", ic: "globe", c: RED, w: 92 },
  { n: "player_tank", ic: "car", c: RED, w: 85 },
  { n: "ai_tank", ic: "car", c: RED, w: 66 },
  { n: "the_range", ic: "ring", c: RED, w: 78 },
];

const Scene3D = () => (
  <SceneSvg viewBox="210 113 849 438" preserveAspectRatio="none">
    <defs>
      <linearGradient id="sky" x1="0" y1="0" x2="0" y2="1">
        <stop offset="0" stopColor="#7f94b2" />
        <stop offset="0.45" stopColor="#8598b4" />
        <stop offset="0.68" stopColor="#8f9cb2" />
        <stop offset="0.73" stopColor="#9a9fac" />
        <stop offset="0.765" stopColor="#7c7f88" />
        <stop offset="0.80" stopColor="#34363f" />
        <stop offset="0.86" stopColor="#0e0e1c" />
        <stop offset="1" stopColor="#030312" />
      </linearGradient>
    </defs>
    <rect x="210" y="113" width="849" height="438" fill="url(#sky)" />
    <g stroke="#55565c" strokeWidth="1" fill="none" opacity=".9">
      <path d="M210 515L1058 532M210 492L1058 505M380 479L1058 490M470 473L1058 480" />
      <path d="M329 551L616 478M527 551L619 477M210 535L557 472M210 508L508 472" />
      <path d="M920 551L730 473M1058 537L779 473M1058 493L833 473" />
    </g>
    <path d="M619 464C619 500 650 526 675 526C700 526 730 500 730 464Z" fill="#0c4a5a" fillOpacity=".55" stroke="#2e93a5" strokeOpacity=".7" />
    <ellipse cx="675" cy="464" rx="55" ry="5" fill="none" stroke="#2e93a5" strokeOpacity=".7" />
    <g fill="none" stroke="#3fa3b5" strokeOpacity=".55">
      <path d="M618 270L574 458L783 460L717 251" />
      <path d="M622 300L590 458M700 300L770 458M652 300L610 458" />
      <path d="M560 274L720 268L777 265M553 214L561 275" />
    </g>
    <polygon fill="#3c4e63" points="550,200 613.3,209.3 720,203.3 785,185 783,200 721.7,221.7 613.3,228.3 553,214" />
    <polygon fill="#bcc4da" points="550.7,186.7 611.7,169 713.3,162.3 782.7,170.7 785,185 720,203.3 613.3,209.3 550,200" />
    <polygon fill="#2f3c4e" points="545,248.3 795,236.7 776.7,265 720,268 560,274.3" />
    <polygon fill="#b8c0d6" points="548.3,214 613.3,228.3 721.7,221.7 787.3,199.3 795,236.7 666.7,243.3 545,248.3" />
    <polygon fill="#b7bfd6" points="618.3,255.7 661.7,254 666.7,456.7 576.7,457.3 615,423.3" />
    <polygon fill="#b7bfd6" points="672.7,254 716.7,251 733.3,423.3 778.3,458.3 681,457.3" />
    <path d="M666 257L673 457" stroke="#3a4a5c" strokeWidth="5" strokeOpacity=".45" fill="none" />
    <path d="M661 113.5L678.5 551" stroke="#a8e820" strokeWidth="1.7" fill="none" />
    <path d="M667 450L725 551" stroke="#36a3f2" strokeWidth="2" fill="none" />
    <path d="M210 462.5L1058 467" stroke="#f23e62" strokeWidth="1.8" fill="none" />
    <g fill="#c4bf9e" stroke="#15151a" strokeWidth="1">
      <path d="M652 233L667 223V249L652 240Z" />
      <rect x="670.5" y="230" width="2.6" height="12" />
      <rect x="677" y="226" width="3" height="22" />
      <path d="M655 286L668 277V303L655 296Z" />
      <rect x="672.7" y="286" width="3" height="10" />
      <rect x="678.5" y="278" width="3" height="22" />
    </g>
    <path d="M1000 150.5H1022" stroke="#ef3e60" strokeWidth="2" />
    <circle cx="1022" cy="128" r="6.5" fill="#86c62c" />
    <text x="1022" y="131.5" textAnchor="middle" fontSize="9" fill="#5a8020" fontFamily="Noto Sans">Y</text>
    <circle cx="1020" cy="142" r="6" fill="#10529a" stroke="#2f8ae6" />
    <circle cx="999.5" cy="150.5" r="6.5" fill="#f43f60" />
    <text x="999.5" y="154" textAnchor="middle" fontSize="9" fill="#a82a42" fontFamily="Noto Sans">X</text>
    <circle cx="1044.5" cy="149.5" r="6" fill="#8c2036" stroke="#ef3e60" />
    <circle cx="1023.5" cy="157" r="6.5" fill="#5f8fc6" />
    <text x="1023.5" y="160.5" textAnchor="middle" fontSize="9" fill="#3f70a8" fontFamily="Noto Sans">Z</text>
    <circle cx="1022" cy="171" r="6" fill="#486f06" stroke="#8ac832" />
  </SceneSvg>
);

const ticks = ["0.0", "0.5", "1.0", "1.5", "2.0", "2.5", "3.0", "3.5", "4.0", "4.5", "5.0", "5.5", "6.0"];

const TrackEndTools = () => (
  <TrackTools>
    <TrackCell $w={30} $sep><I n="curve" s={12} /><I n="chevDown" s={9} c="#9a9ea5" /></TrackCell>
    <TrackCell $w={29} $sep><I n="caret" s={12} c="#f3bb5c" /><I n="chevDown" s={9} c="#9a9ea5" /></TrackCell>
    <TrackCell $w={29} $sep><I n="wrap" s={12} c="#c38ef1" /><I n="chevDown" s={9} c="#9a9ea5" /></TrackCell>
    <TrackCell $w={28}><I n="trash" s={12} /></TrackCell>
  </TrackTools>
);

const AnimPanel = () => (
  <Bottom>
    <ToolRow $h={24}>
      <Slot><I n="prev" s={11} /></Slot>
      <Slot><I n="stepBack" s={11} /></Slot>
      <Slot><I n="stop" s={11} /></Slot>
      <Slot><I n="stepFwd" s={11} /></Slot>
      <Slot><I n="play" s={11} /></Slot>
      <Field $w={46} $ml={2}><span>2.0</span></Field>
      <Slot $w={20}>
        <div>
          <I n="chevUp" s={9} c="#9a9ea5" />
          <I n="chevDown" s={9} c="#9a9ea5" />
        </div>
      </Slot>
      <Sep $mx={1} />
      <Chip $w={58} $ml={6}>Animation</Chip>
      <Chip $w={442} $ml={3} $sel>
        <span>crush</span>
        <I n="chevDown" s={10} />
      </Chip>
      <Slot $w={26}><I n="rename" s={12} /></Slot>
      <Sep $mx={2} />
      <Chip $w={27} $ml={3}>Edit</Chip>
      <Sep $mx={4} />
      <Slot $w={24}><I n="onion" s={12} /></Slot>
      <Slot $w={24}><I n="dots" /></Slot>
      <Sep $mx={2} />
      <Slot $w={26}><I n="pushpin" s={12} /></Slot>
    </ToolRow>
    <Timeline>
      <TimelineBody>
        <RulerRow>
          <AddTrack>
            <I n="plus" s={13} />
            <span>Add Track</span>
            <Slot $w={20} $ml={7}><I n="arrows" s={11} /></Slot>
          </AddTrack>
          <Ruler>
            {ticks.map((t, i) => (
              <Tick key={t} $major={i % 2 === 0}>{t}</Tick>
            ))}
          </Ruler>
          <LengthBox>
            <Slot $w={18} $ml={15}><I n="timer" s={12} /></Slot>
            <Field $w={52}><Slot $w={30}>2.0</Slot></Field>
            <Slot $w={24}><I n="loop" s={13} /></Slot>
          </LengthBox>
        </RulerRow>
        <TrackRow>
          <TrackName><I n="globe" c={RED} s={11} /><TrackLabel>RBRL</TrackLabel></TrackName>
          <TrackLane />
          <div />
        </TrackRow>
        <TrackRow $line>
          <TrackName $sub><Check $on><I n="checkMark" s={9} /></Check><Dia /><TrackLabel>position</TrackLabel></TrackName>
          <TrackLane><KeyFrame $x={0} /><KeyFrame $x={200} /></TrackLane>
          <TrackEndTools />
        </TrackRow>
        <TrackRow $line>
          <TrackName $sub $alt><Check $on><I n="checkMark" s={9} /></Check><Dia /><TrackLabel>rotation</TrackLabel></TrackName>
          <TrackLane><KeyFrame $x={0} /><KeyFrame $x={200} /></TrackLane>
          <TrackEndTools />
        </TrackRow>
        <TrackRow>
          <TrackName><I n="globe" c={RED} s={11} /><TrackLabel>RBLL</TrackLabel></TrackName>
          <TrackLane />
          <div />
        </TrackRow>
      </TimelineBody>
      <Playhead />
      <ScrollArea><VThumb /></ScrollArea>
    </Timeline>
    <ToolRow $h={24} $pl={272}>
      <Slot><I n="bezier" c="#3f75a8" /></Slot>
      <Slot $ml={1}><I n="filter" s={11} /></Slot>
      <Slot><I n="listTree" s={11} /></Slot>
      <Sep $mx={3} />
      <Slot><I n="snapT" s={12} /></Slot>
      <Slot><I n="snapK" s={12} c={BLUE} /></Slot>
      <Slot $w={22}>
        <FpsBadge>FPS</FpsBadge>
      </Slot>
      <BarText $ml={7}>Nearest FPS: 30</BarText>
      <Field $w={75} $ml={6}><Slot $w={58}>0.0333</Slot></Field>
      <Chip $w={61} $ml={3} $sel><span>Seconds</span><I n="chevDown" s={10} /></Chip>
      <Sep $mx={4} />
      <Slot $w={16}><I n="zoom" s={11} /></Slot>
      <ZoomTrack>
        <ZoomFill />
        <ZoomThumb />
      </ZoomTrack>
      <Slot $w={26}><I n="fit" s={13} /></Slot>
    </ToolRow>
    <BottomTabs>
      <span>Output</span>
      <DebugTab><DebugDot />Debugger (106)</DebugTab>
      <span>Audio</span>
      <BarText $c="#5ca4e6">Animation</BarText>
      <span>Shader Editor</span>
      <StatusEnd>
        <I n="godot" c="#d8d9dc" />
        <BarText $ml={8} $c="#8a8e95">4.4.stable</BarText>
        <Slot $w={24} $ml={5}><I n="pushpin" s={11} /></Slot>
        <Slot $w={24}><I n="layout" s={12} /></Slot>
      </StatusEnd>
    </BottomTabs>
  </Bottom>
);

const Key = () => (
  <KeyCell><I n="key" s={12} c="#d0d2d6" /></KeyCell>
);
const Caret = () => <I n="chevRight" s={8} c="#8e9299" />;

const BoolProp = ({ label, on }: { label: string; on?: boolean }) => (
  <Prop>
    <PropLabel>{label}</PropLabel>
    <Value>
      <Check $on={on}>{on && <I n="checkMark" s={9} />}</Check>
      <BarText $ml={1} $c={on ? "#5ca4e6" : TXT}>On</BarText>
    </Value>
    <Key />
  </Prop>
);

const Inspector = () => (
  <RightCol>
    <TabStrip>
      <DockTab $on>Inspector</DockTab>
      <DockTab>Node</DockTab>
      <DockTab>History</DockTab>
      <StripEnd $w={12}><I n="dots" c="#7a7e85" /></StripEnd>
    </TabStrip>
    <DockPanel $h={677}>
      <ToolRow $h={27}>
        <Slot><I n="fileAdd" /></Slot>
        <Slot><I n="folderOpen" /></Slot>
        <Slot><I n="save" c="#7a7e85" /></Slot>
        <Slot><I n="dots" /></Slot>
        <Slot $w={18} $ml={137}><I n="chevLeft" s={11} /></Slot>
        <Slot $w={18}><I n="chevNext" s={11} c="#6d727b" /></Slot>
        <Slot><I n="history" s={13} /></Slot>
      </ToolRow>
      <ToolRow $h={24} $pl={2}>
        <Field $w={266}>
          <BarText>
            <SelectName><I n="film" c="#c38ef1" />AnimationPlayer</SelectName>
          </BarText>
          <I n="chevDown" s={10} />
        </Field>
        <Slot $w={26}><I n="doc" s={13} /></Slot>
      </ToolRow>
      <ToolRow $h={24} $pl={2} $mt={3}>
        <Field $w={266}><Hint>Filter Properties</Hint><I n="search" s={11} /></Field>
        <Slot $w={26}><I n="tools" s={13} /></Slot>
      </ToolRow>
      <InspBox>
        <Banner><I n="film" c="#c38ef1" />AnimationPlayer</Banner>
        <PropGroup>
          <Prop>
            <PropLabel>Current Animation</PropLabel>
            <Value><EndIcon><I n="chevDown" s={10} /></EndIcon></Value>
            <Key />
          </Prop>
          <Prop>
            <PropLabel>Speed Scale</PropLabel>
            <Value><SpeedText>1.0</SpeedText><SpeedLine /></Value>
            <Key />
          </Prop>
          <BoolProp label="Movie Quit on Finish" />
        </PropGroup>
        <Section><Caret />Playback Options</Section>
        <Banner><I n="film" c="#9b9ea4" />AnimationMixer</Banner>
        <PropGroup>
          <BoolProp label="Active" on />
          <BoolProp label="Deterministic" />
          <BoolProp label="Reset on Save" on />
          <Prop>
            <PropLabel>Root Node</PropLabel>
            <Value>
              <I n="globe" c={RED} s={16} />
              <RootName>Recognizer</RootName>
              <I n="dots" s={12} />
            </Value>
            <Key />
          </Prop>
          <Prop>
            <PropLabel>Libraries<RevertSlot><I n="revert" s={12} /></RevertSlot></PropLabel>
            <Value $bg="#272c35" $center>Dictionary (size 1)</Value>
            <Key />
          </Prop>
        </PropGroup>
        <Section><Caret />Root Motion</Section>
        <Section><Caret />Audio</Section>
        <Section><Caret />Callback Mode</Section>
        <Banner><I n="ring" c="#e0e0e0" />Node</Banner>
        <Section><Caret />Process</Section>
        <Section><Caret />Physics Interpolation</Section>
        <Section><Caret />Auto Translate</Section>
        <Section><Caret />Editor Description</Section>
        <Prop>
          <PropLabel>Script</PropLabel>
          <ScriptValue>
            <ScriptText>&lt;empty&gt;</ScriptText>
            <ScriptDrop><I n="chevDown" s={9} /></ScriptDrop>
          </ScriptValue>
          <Key />
        </Prop>
        <MetaWrap>
          <MetaButton><I n="plus" s={13} /><MetaText>Add Metadata</MetaText></MetaButton>
        </MetaWrap>
      </InspBox>
    </DockPanel>
  </RightCol>
);

export default function App() {
  return (
    <Shell>
      <Global />
      <TitleBar>
        <Glyph width={15} height={15} viewBox="0 0 16 16">
          <path fill="#478cbf" d="M2 4l2 1 1-2 2 1 1-1 1 1 2-1 1 2 2-1 1.5 4-1 1V13c-2 2-9 2-11 0V9l-1-1z" />
          <circle cx="5.2" cy="8" r="2" fill="#fff" />
          <circle cx="10.8" cy="8" r="2" fill="#fff" />
          <circle cx="5.5" cy="8.2" r="1" fill="#333" />
          <circle cx="10.5" cy="8.2" r="1" fill="#333" />
          <path d="M4 12h8" stroke="#fff" />
        </Glyph>
        <span>recognizer.tscn - CycleGame - Godot Engine</span>
        <WinButtons>
          <WinButton>
            <Glyph width={12} height={12} viewBox="0 0 12 12" $c="#111"><path d="M1 6h10" stroke="currentColor" strokeWidth="1" /></Glyph>
          </WinButton>
          <WinButton>
            <Glyph width={12} height={12} viewBox="0 0 12 12" $c="#111"><path fill="none" stroke="currentColor" d="M1.5 3.5h7v7h-7zM3.5 3.5V1.5h7v7h-2" /></Glyph>
          </WinButton>
          <WinButton>
            <Glyph width={12} height={12} viewBox="0 0 12 12" $c="#111"><path d="M1 1l10 10M11 1L1 11" stroke="currentColor" /></Glyph>
          </WinButton>
        </WinButtons>
      </TitleBar>
      <MenuBar>
        <Menus>
          <span>Scene</span><span>Project</span><span>Debug</span><span>Editor</span><span>Help</span>
        </Menus>
        <Modes>
          <Mode><I n="d2" />2D</Mode>
          <Mode $on><I n="d3" c={BLUE} />3D</Mode>
          <Mode><I n="script" />Script</Mode>
          <Mode><I n="game" />Game</Mode>
          <Mode><I n="download" />AssetLib</Mode>
        </Modes>
        <RunSide>
          <RunBar>
            <I n="play" />
            <I n="pause" c="#8a8e95" />
            <I n="stop" c="#8a8e95" />
            <I n="monitor" c="#9a9ea5" />
            <I n="clapperPlay" />
            <I n="clapperLine" />
            <I n="reel" c="#a8abb0" />
          </RunBar>
          <Renderer>Forward+<I n="chevDown" s={9} c="#5c8a3c" /></Renderer>
        </RunSide>
      </MenuBar>
      <Work>
        <LeftCol>
          <SceneDock />
          <FileDock />
        </LeftCol>
        <CenterCol>
          <TabStrip>
            {editorTabs.map((t) => (
              <EditorTab key={t.n} $w={t.w}><I n={t.ic} c={t.c} s={11} />{t.n}</EditorTab>
            ))}
            <EditorTab $on $w={100}>
              <I n="globe" c={RED} s={11} />recognizer
              <Slot $w={21} $ml={2}><I n="close" s={11} /></Slot>
            </EditorTab>
            <Slot $w={26}><I n="plus" s={13} c="#8a8e95" /></Slot>
            <StripEnd $w={22}><I n="fullscreen" s={11} /></StripEnd>
          </TabStrip>
          <ToolRow $h={30} $pl={2}>
            <Slot $w={22} $on><I n="cursor" s={12} c={BLUE} /></Slot>
            <Sep $mx={3} $h={22} />
            <Slot><I n="move" /></Slot>
            <Slot><I n="rotate" /></Slot>
            <Slot><I n="scale" /></Slot>
            <Sep $mx={3} $h={22} />
            <Slot><I n="listSel" /></Slot>
            <Slot><I n="lock" c="#8a8e95" /></Slot>
            <Slot $ml={1}><I n="group" c="#6d727b" /></Slot>
            <Slot><I n="ruler" /></Slot>
            <Sep $mx={3} $h={22} />
            <Slot $w={20} $ml={2} $on><I n="cubeFill" c={BLUE} /></Slot>
            <Slot $w={26}><I n="snap" /></Slot>
            <Sep $mx={3} $h={22} />
            <Slot $w={20} $ml={1} $on><I n="sun" c={BLUE} /></Slot>
            <Slot $w={20} $ml={4} $on><I n="world" c={BLUE} /></Slot>
            <Slot $w={28}><I n="dots" /></Slot>
            <Sep $mx={1} $h={22} />
            <BarText $ml={9}>Transform</BarText>
            <BarText $ml={13}>View</BarText>
            <Sep $mx={10} $h={22} />
          </ToolRow>
          <Viewport>
            <Scene3D />
            <Perspective><I n="dots" s={10} />Perspective</Perspective>
          </Viewport>
          <AnimPanel />
        </CenterCol>
        <Inspector />
      </Work>
    </Shell>
  );
}
